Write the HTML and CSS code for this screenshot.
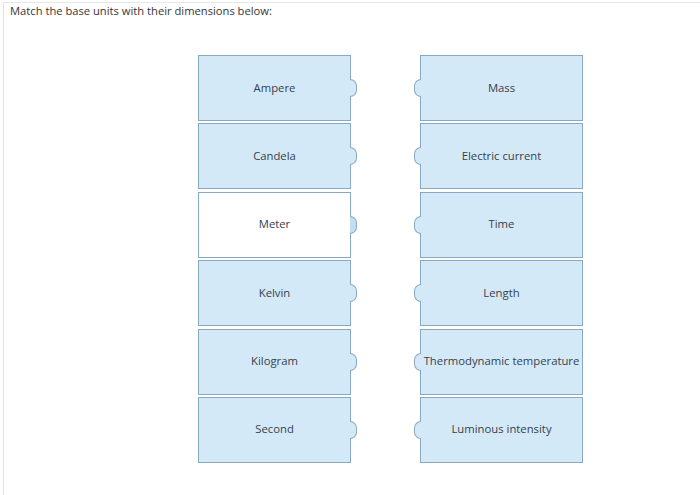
FILE: index.html
```html
<!DOCTYPE html>
<html>
<head>
<meta charset="utf-8">
<link rel="stylesheet" href="styles.css">
</head>
<body>
<div class="frame">
  <p class="prompt">Match the base units with their dimensions below:</p>
  <div class="board">
    <div class="col">
      <div class="tile tile-left">Ampere</div>
      <div class="tile tile-left">Candela</div>
      <div class="tile tile-left tile-active">Meter</div>
      <div class="tile tile-left">Kelvin</div>
      <div class="tile tile-left">Kilogram</div>
      <div class="tile tile-left">Second</div>
    </div>
    <div class="col">
      <div class="tile tile-right">Mass</div>
      <div class="tile tile-right">Electric current</div>
      <div class="tile tile-right">Time</div>
      <div class="tile tile-right">Length</div>
      <div class="tile tile-right">Thermodynamic temperature</div>
      <div class="tile tile-right">Luminous intensity</div>
    </div>
  </div>
</div>
</body>
</html>
```
FILE: styles.css
```css
html, body {
  margin: 0;
  padding: 0;
  background: #ffffff;
}
body {
  font-family: "Open Sans", "Liberation Sans", sans-serif;
  color: #333b44;
}
.frame {
  box-sizing: border-box;
  margin: 2px 0 0 3px;
  height: 493px;
  border-top: 1px solid #e8e8e8;
  border-left: 1px solid #e2e2e2;
}
.prompt {
  margin: 0;
  padding-left: 6px;
  font-size: 11.2px;
  line-height: 15px;
  color: #363636;
}
.board {
  display: grid;
  grid-template-columns: 153px 163px;
  column-gap: 69px;
  margin: 37px 0 0 194px;
}
.col {
  display: flex;
  flex-direction: column;
  gap: 2.4px;
}
.tile {
  position: relative;
  box-sizing: border-box;
  height: 66px;
  padding-bottom: 2px;
  display: flex;
  align-items: center;
  justify-content: center;
  background: #d4e9f7;
  border: 1px solid #89a9c1;
  font-size: 11.3px;
  color: #36414d;
  white-space: nowrap;
}
.tile::after {
  content: "";
  position: absolute;
  top: 50%;
  box-sizing: border-box;
  width: 7px;
  height: 18px;
  margin-top: -9px;
  background: #d4e9f7;
  border: 1px solid #89a9c1;
}
.tile-left::after {
  right: -7px;
  border-left: none;
  border-radius: 0 9px 9px 0 / 0 9px 9px 0;
}
.tile-right::after {
  left: -7px;
  border-right: none;
  border-radius: 9px 0 0 9px / 9px 0 0 9px;
}
.tile-active {
  background: #ffffff;
}
.tile-active::after {
  background: #c3ddf1;
}
```
